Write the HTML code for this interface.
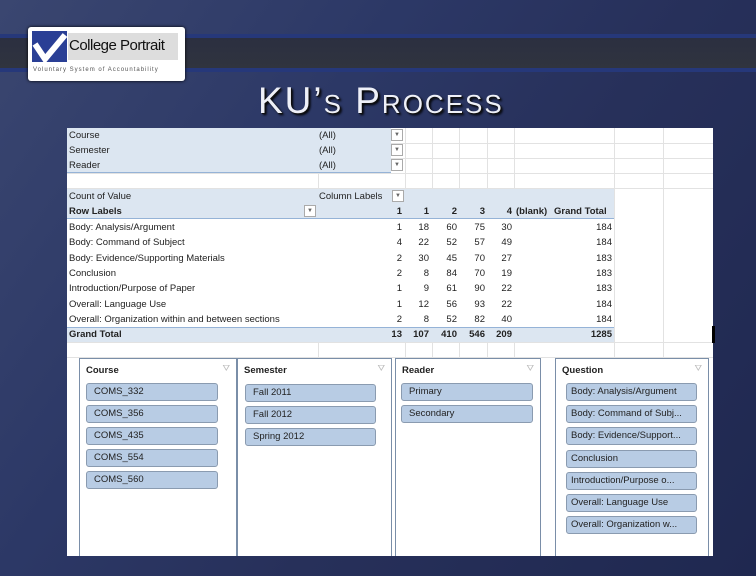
<!DOCTYPE html>
<html><head><meta charset="utf-8"><style>
*{margin:0;padding:0;box-sizing:border-box}
body{width:756px;height:576px;overflow:hidden;position:relative;font-family:"Liberation Sans",sans-serif;
background:linear-gradient(125deg,#3a4670 0%,#2c3866 35%,#27305a 60%,#1f2850 100%);}
.a{position:absolute}
.band{left:0;top:34px;width:756px;height:40px;background:linear-gradient(#26387a 0,#26387a 4px,#2b2f40 4px,#30343f 34px,#26387a 34px,#26387a 38px,transparent 38px)}
.logo{left:28px;top:27px;width:157px;height:54px;background:#fff;border-radius:3px;box-shadow:0 0 3px #000}
.sheet{left:67px;top:128px;width:646px;height:428px;background:#fff}
.t{font-size:9.5px;color:#222;white-space:nowrap;line-height:15px}
.b{font-weight:bold}
.hl{background:#dce6f1}
.gl{background:#e2e2e2}
.n{text-align:right;width:26px}
.sl{background:#fff;border:1px solid #7a8ea8;border-bottom:none}
.it{position:absolute;height:18px;background:#b8cce4;border:1px solid #8a9bb0;border-radius:3px;font-size:9.5px;color:#222;line-height:16px;padding-left:7px;white-space:nowrap;overflow:hidden}
.sh{position:absolute;top:6px;left:6px;font-size:9.5px;font-weight:bold;color:#222}
.fi{position:absolute;top:4px;right:6px;font-size:9px;color:#bbb}
.dd{width:12px;height:12px;border:1px solid #aaa;background:#fff;font-size:6px;color:#666;text-align:center;line-height:10px}
</style></head><body>
<div class="a band"></div>
<div class="a logo">
 <div class="a" style="left:4px;top:4px;width:35px;height:31px;background:#2a3f95"></div>
 <svg class="a" style="left:4px;top:4px" width="35" height="31"><path d="M3 13 L13 28 L33 4" stroke="#fff" stroke-width="6" fill="none"/></svg>
 <div class="a" style="left:40px;top:6px;width:110px;height:27px;background:#ddd"></div>
 <div class="a" style="left:41px;top:10px;font-size:15px;color:#111;letter-spacing:-.5px">College Portrait</div>
 <div class="a" style="left:5px;top:40px;font-size:6px;color:#555;letter-spacing:1px">Voluntary System of Accountability</div>
</div>
<div class="a" style="left:258px;top:80px;font-family:'Liberation Sans',sans-serif;font-size:37px;color:#eef0f8;text-shadow:1px 1px 0 #111,2px 2px 2px #000;letter-spacing:2px;font-variant:small-caps">KU’s Process</div>

<div class="a sheet">
 <div class="a gl" style="left:0;top:15px;width:646px;height:1px"></div>
 <div class="a gl" style="left:0;top:30px;width:646px;height:1px"></div>
 <div class="a gl" style="left:0;top:45px;width:646px;height:1px"></div>
 <div class="a gl" style="left:0;top:60px;width:646px;height:1px"></div>
 <div class="a gl" style="left:0;top:214px;width:646px;height:1px"></div>
 <div class="a gl" style="left:0;top:229px;width:646px;height:1px"></div>
 <div class="a gl" style="left:251px;top:45px;width:1px;height:16px"></div>
 <div class="a gl" style="left:338px;top:0;width:1px;height:61px"></div>
 <div class="a gl" style="left:365px;top:0;width:1px;height:61px"></div>
 <div class="a gl" style="left:392px;top:0;width:1px;height:61px"></div>
 <div class="a gl" style="left:420px;top:0;width:1px;height:61px"></div>
 <div class="a gl" style="left:447px;top:0;width:1px;height:61px"></div>
 <div class="a gl" style="left:547px;top:0;width:1px;height:428px"></div>
 <div class="a gl" style="left:596px;top:0;width:1px;height:428px"></div>
 <div class="a gl" style="left:251px;top:214px;width:1px;height:16px"></div>
 <div class="a gl" style="left:338px;top:214px;width:1px;height:16px"></div>
 <div class="a gl" style="left:365px;top:214px;width:1px;height:16px"></div>
 <div class="a gl" style="left:392px;top:214px;width:1px;height:16px"></div>
 <div class="a gl" style="left:420px;top:214px;width:1px;height:16px"></div>
 <div class="a gl" style="left:447px;top:214px;width:1px;height:16px"></div>
 <div class="a hl" style="left:0;top:0;width:324px;height:45px;border-bottom:1px solid #95b3d7"></div>
 <div class="a t" style="left:2px;top:0">Course</div><div class="a t" style="left:252px;top:0">(All)</div>
 <div class="a t" style="left:2px;top:15px">Semester</div><div class="a t" style="left:252px;top:15px">(All)</div>
 <div class="a t" style="left:2px;top:30px">Reader</div><div class="a t" style="left:252px;top:30px">(All)</div>
 <div class="a dd" style="left:324px;top:1px">▼</div>
 <div class="a dd" style="left:324px;top:16px">▼</div>
 <div class="a dd" style="left:324px;top:31px">▼</div>
 <div class="a hl" style="left:0;top:61px;width:547px;height:30px;border-bottom:1px solid #95b3d7"></div>
 <div class="a t" style="left:2px;top:61px">Count of Value</div>
 <div class="a t" style="left:252px;top:61px">Column Labels</div>
 <div class="a dd" style="left:325px;top:62px">▼</div>
 <div class="a t b" style="left:2px;top:76px">Row Labels</div>
 <div class="a dd" style="left:237px;top:77px">▼</div>
 <div class="a t b" style="left:309px;top:76px;width:640px">
  <span class="a n" style="left:0">1</span><span class="a n" style="left:27px">1</span><span class="a n" style="left:55px">2</span><span class="a n" style="left:83px">3</span><span class="a n" style="left:110px">4</span><span class="a" style="left:140px">(blank)</span><span class="a" style="left:178px">Grand Total</span></div>
 <div id="rows"></div>
 <div class="a hl" style="left:0;top:199px;width:547px;height:15px;border-top:1px solid #95b3d7"></div>
 <div class="a t b" style="left:2px;top:199px">Grand Total</div>
 <div class="a t b" style="left:309px;top:199px;width:300px">
  <span class="a n" style="left:0">13</span><span class="a n" style="left:27px">107</span><span class="a n" style="left:55px">410</span><span class="a n" style="left:83px">546</span><span class="a n" style="left:110px">209</span><span class="a n" style="left:210px">1285</span></div>
</div>
<div class="a" style="left:712px;top:326px;width:3px;height:17px;background:#000"></div>

<div class="a sl" style="left:79px;top:358px;width:158px;height:198px"><div class="sh">Course</div><div class="fi">⛛</div></div>
<div class="a sl" style="left:237px;top:358px;width:155px;height:198px"><div class="sh">Semester</div><div class="fi">⛛</div></div>
<div class="a sl" style="left:395px;top:358px;width:146px;height:198px"><div class="sh">Reader</div><div class="fi">⛛</div></div>
<div class="a sl" style="left:555px;top:358px;width:154px;height:198px"><div class="sh">Question</div><div class="fi">⛛</div></div>
<div class="it" style="left:86px;top:383px;width:132px">COMS_332</div>
<div class="it" style="left:86px;top:405px;width:132px">COMS_356</div>
<div class="it" style="left:86px;top:427px;width:132px">COMS_435</div>
<div class="it" style="left:86px;top:449px;width:132px">COMS_554</div>
<div class="it" style="left:86px;top:471px;width:132px">COMS_560</div>
<div class="it" style="left:245px;top:384px;width:131px">Fall 2011</div>
<div class="it" style="left:245px;top:406px;width:131px">Fall 2012</div>
<div class="it" style="left:245px;top:428px;width:131px">Spring 2012</div>
<div class="it" style="left:401px;top:383px;width:132px">Primary</div>
<div class="it" style="left:401px;top:405px;width:132px">Secondary</div>
<div class="it" style="left:566px;top:383px;width:131px;padding-left:4px">Body: Analysis/Argument</div>
<div class="it" style="left:566px;top:405px;width:131px;padding-left:4px">Body: Command of Subj...</div>
<div class="it" style="left:566px;top:427px;width:131px;padding-left:4px">Body: Evidence/Support...</div>
<div class="it" style="left:566px;top:450px;width:131px;padding-left:4px">Conclusion</div>
<div class="it" style="left:566px;top:472px;width:131px;padding-left:4px">Introduction/Purpose o...</div>
<div class="it" style="left:566px;top:494px;width:131px;padding-left:4px">Overall: Language Use</div>
<div class="it" style="left:566px;top:516px;width:131px;padding-left:4px">Overall: Organization w...</div>

<script>
var d=[["Body: Analysis/Argument",1,18,60,75,30,184],["Body: Command of Subject",4,22,52,57,49,184],["Body: Evidence/Supporting Materials",2,30,45,70,27,183],["Conclusion",2,8,84,70,19,183],["Introduction/Purpose of Paper",1,9,61,90,22,183],["Overall: Language Use",1,12,56,93,22,184],["Overall: Organization within and between sections",2,8,52,82,40,184]];
var h="";d.forEach(function(r,i){var y=92+i*15.3;h+='<div class="a t" style="left:2px;top:'+y+'px">'+r[0]+'</div>';var L=[309,336,364,392,419,519];for(var k=1;k<7;k++)h+='<div class="a t n" style="left:'+L[k-1]+'px;top:'+y+'px">'+r[k]+'</div>';});
document.getElementById("rows").outerHTML=h;
</script>
</body></html>
